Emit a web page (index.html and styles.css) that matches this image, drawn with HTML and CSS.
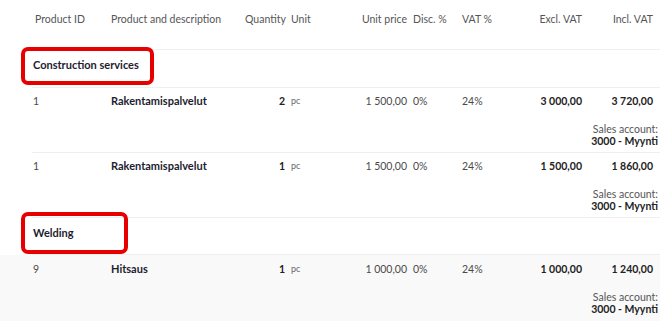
FILE: index.html
```html
<!DOCTYPE html>
<html>
<head>
<meta charset="utf-8">
<link rel="stylesheet" href="styles.css">
</head>
<body>
<div class="page">
  <div class="table">
    <div class="row head">
      <div class="c id">Product ID</div>
      <div class="c prod">Product and description</div>
      <div class="c qty">Quantity</div>
      <div class="c unit">Unit</div>
      <div class="c price">Unit price</div>
      <div class="c disc">Disc. %</div>
      <div class="c vat">VAT %</div>
      <div class="c excl">Excl. VAT</div>
      <div class="c incl">Incl. VAT</div>
    </div>

    <div class="group g1">
      <span class="gname">Construction services</span>
      <span class="mark mark1"></span>
    </div>

    <div class="row item">
      <div class="c id">1</div>
      <div class="c prod name">Rakentamispalvelut</div>
      <div class="c qty b">2</div>
      <div class="c unit small">pc</div>
      <div class="c price">1 500,00</div>
      <div class="c disc">0%</div>
      <div class="c vat">24%</div>
      <div class="c excl b">3 000,00</div>
      <div class="c incl b">3 720,00</div>
      <div class="acct"><span class="al">Sales account:</span><span class="av">3000 - Myynti</span></div>
    </div>

    <div class="row item">
      <div class="c id">1</div>
      <div class="c prod name">Rakentamispalvelut</div>
      <div class="c qty b">1</div>
      <div class="c unit small">pc</div>
      <div class="c price">1 500,00</div>
      <div class="c disc">0%</div>
      <div class="c vat">24%</div>
      <div class="c excl b">1 500,00</div>
      <div class="c incl b">1 860,00</div>
      <div class="acct"><span class="al">Sales account:</span><span class="av">3000 - Myynti</span></div>
    </div>

    <div class="group g2">
      <span class="gname">Welding</span>
      <span class="mark mark2"></span>
    </div>

    <div class="row item hover">
      <div class="c id">9</div>
      <div class="c prod name">Hitsaus</div>
      <div class="c qty b">1</div>
      <div class="c unit small">pc</div>
      <div class="c price">1 000,00</div>
      <div class="c disc">0%</div>
      <div class="c vat">24%</div>
      <div class="c excl b">1 000,00</div>
      <div class="c incl b">1 240,00</div>
      <div class="acct"><span class="al">Sales account:</span><span class="av">3000 - Myynti</span></div>
    </div>
  </div>
</div>
</body>
</html>
```

FILE: styles.css
```css
html, body {
  margin: 0;
  padding: 0;
  background: #ffffff;
}
body {
  font-family: Lato, "Open Sans", sans-serif;
  font-size: 10.5px;
  color: #4a4a4a;
}
.page {
  padding-left: 32px;
  width: 628px;
}
.table {
  width: 628px;
}
.row {
  display: grid;
  grid-template-columns: 79px 134px 42px 63px 59px 51px 60px 64px 76px;
  align-items: start;
}
.c {
  white-space: nowrap;
  line-height: 14px;
}
.head {
  border-bottom: 1px solid #efefef;
  padding-top: 12px;
  box-sizing: border-box;
  height: 50px;
  color: #555;
}
.id { padding-left: 3px; }
.item .id { padding-left: 1px; }
.qty { text-align: right; padding-right: 2px; }
.unit { padding-left: 4px; }
.price { text-align: right; padding-right: 2px; }
.disc { padding-left: 4px; }
.vat { padding-left: 2px; }
.excl { text-align: right; padding-right: 2px; }
.incl { text-align: right; padding-right: 7px; }
.b { font-weight: 700; color: #222; }
.name { font-weight: 700; color: #1d1d30; font-size: 11px; }
.small { font-size: 9px; color: #666; }

.group {
  position: relative;
  height: 38px;
  border-bottom: 1px solid #efefef;
  box-sizing: border-box;
  padding-top: 8px;
  padding-left: 1px;
}
.g2 { height: 37px; }
.gname {
  font-weight: 700;
  color: #1d1d30;
  font-size: 11px;
  line-height: 14px;
}
.mark {
  position: absolute;
  border: 4px solid #e60000;
  border-radius: 7px;
  box-sizing: border-box;
}
.mark1 { left: -11px; top: -3px; width: 133px; height: 38px; }
.mark2 { left: -11px; top: -6px; width: 107px; height: 42px; }

.item {
  height: 65px;
  box-sizing: border-box;
  border-bottom: 1px solid #efefef;
  padding-top: 6px;
  position: relative;
}
.hover {
  background: #f9f9f9;
  border-bottom: none;
  height: 66px;
  padding-top: 7px;
  box-shadow: -32px 0 0 #f9f9f9;
}
.acct {
  grid-column: 1 / -1;
  margin-top: 10px;
  text-align: right;
  padding-right: 2px;
  display: flex;
  flex-direction: column;
  align-items: flex-end;
}
.al { line-height: 12px; color: #555; }
.av { line-height: 13px; font-weight: 700; color: #222; }
```
